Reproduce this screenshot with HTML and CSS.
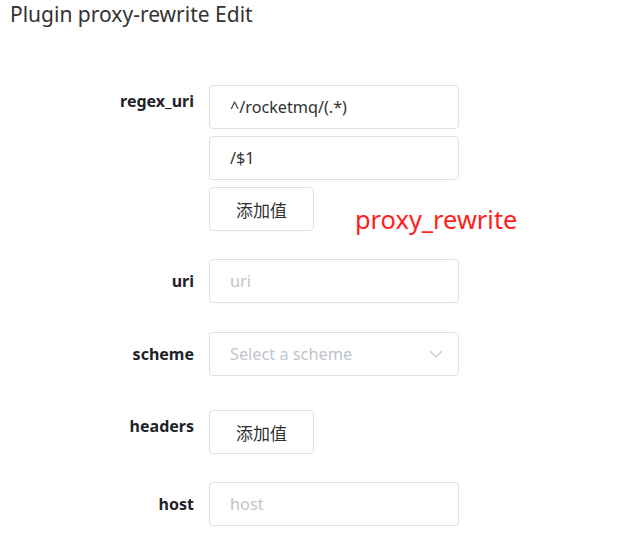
FILE: index.html
```html
<!DOCTYPE html>
<html>
<head>
<meta charset="utf-8">
<link rel="stylesheet" href="styles.css">
</head>
<body>
<div class="page">
  <h1 class="title">Plugin proxy-rewrite Edit</h1>
  <form class="form">
    <div class="row">
      <label class="label label-top">regex_uri</label>
      <div class="control stack">
        <div class="input"><span class="value">^/rocketmq/(.*)</span></div>
        <div class="input"><span class="value">/$1</span></div>
        <div class="btn">添加值</div>
      </div>
    </div>
    <div class="row">
      <label class="label">uri</label>
      <div class="control">
        <div class="input"><span class="placeholder">uri</span></div>
      </div>
    </div>
    <div class="row row-select">
      <label class="label">scheme</label>
      <div class="control">
        <div class="input select">
          <span class="placeholder">Select a scheme</span>
          <svg class="chevron" width="14" height="8" viewBox="0 0 14 8"><path d="M1 1 L7 7 L13 1" fill="none" stroke="#c0c4cc" stroke-width="1.2"/></svg>
        </div>
      </div>
    </div>
    <div class="row">
      <label class="label label-top">headers</label>
      <div class="control">
        <div class="btn">添加值</div>
      </div>
    </div>
    <div class="row">
      <label class="label">host</label>
      <div class="control">
        <div class="input"><span class="placeholder">host</span></div>
      </div>
    </div>
  </form>
  <div class="annotation">proxy_rewrite</div>
</div>
</body>
</html>
```
FILE: styles.css
```css
* { box-sizing: border-box; }
html, body { margin: 0; padding: 0; background: #fff; }
body {
  font-family: "Noto Sans", "Open Sans", "Noto Sans CJK SC", sans-serif;
  color: #333;
  width: 620px;
  height: 544px;
  overflow: hidden;
}
.page { position: relative; }
.title {
  margin: 0;
  padding: 0 0 0 10px;
  font-size: 21px;
  font-weight: 400;
  line-height: 29px;
  color: #333;
}
.form {
  margin-top: 56px;
  display: flex;
  flex-direction: column;
  gap: 28px;
}
.row {
  display: flex;
  gap: 15px;
}
.row-select { margin-top: 1px; margin-bottom: 6px; }
.label {
  width: 194px;
  text-align: right;
  font-weight: 700;
  font-size: 16px;
  line-height: 44px;
  color: #1f2329;
}
.label-top { line-height: 32px; }
.control { width: 250px; }
.stack {
  display: flex;
  flex-direction: column;
  gap: 7px;
  align-items: flex-start;
}
.input {
  width: 250px;
  height: 44px;
  border: 1px solid #dcdfe6;
  border-radius: 4px;
  padding: 0 19px 0 20px;
  display: flex;
  align-items: center;
  justify-content: flex-start;
  font-size: 16px;
}
.value { color: #303133; font-size: 16.2px; }
.placeholder { color: #c0c4cc; font-size: 16.3px; }
.select { justify-content: space-between; padding-right: 15px; }
.chevron { display: block; }
.btn {
  width: 105px;
  height: 44px;
  border: 1px solid #dcdfe6;
  border-radius: 4px;
  display: flex;
  align-items: center;
  justify-content: center;
  font-family: "Noto Sans CJK SC", sans-serif;
  font-size: 17px;
  color: #303133;
}
.annotation {
  position: absolute;
  left: 355px;
  top: 203px;
  font-size: 25.4px;
  line-height: 32px;
  color: #ff1e1e;
}
```
